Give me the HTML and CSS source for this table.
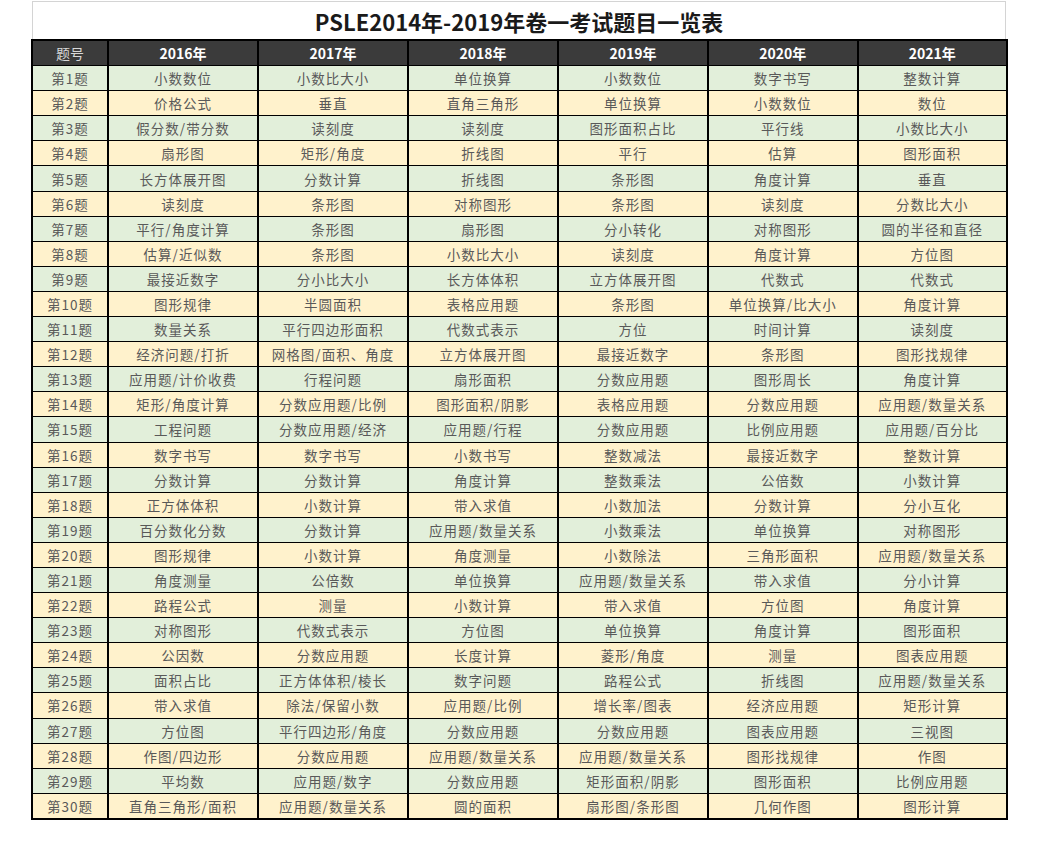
FILE: index.html
```html
<!DOCTYPE html>
<html lang="zh">
<head>
<meta charset="utf-8">
<title>PSLE2014年-2019年卷一考试题目一览表</title>
<link rel="stylesheet" href="styles.css">
</head>
<body>
<div class="sheet">
  <div class="title">PSLE2014年-2019年卷一考试题目一览表</div>
  <table class="grid">
    <colgroup>
      <col class="c-no"><col class="c-y"><col class="c-y"><col class="c-y"><col class="c-y"><col class="c-z"><col class="c-z">
    </colgroup>
    <thead>
      <tr><th class="h-no">题号</th><th>2016年</th><th>2017年</th><th>2018年</th><th>2019年</th><th>2020年</th><th>2021年</th></tr>
    </thead>
    <tbody>
      <tr class="g"><td>第1题</td><td>小数数位</td><td>小数比大小</td><td>单位换算</td><td>小数数位</td><td>数字书写</td><td>整数计算</td></tr>
      <tr class="y"><td>第2题</td><td>价格公式</td><td>垂直</td><td>直角三角形</td><td>单位换算</td><td>小数数位</td><td>数位</td></tr>
      <tr class="g"><td>第3题</td><td>假分数/带分数</td><td>读刻度</td><td>读刻度</td><td>图形面积占比</td><td>平行线</td><td>小数比大小</td></tr>
      <tr class="y"><td>第4题</td><td>扇形图</td><td>矩形/角度</td><td>折线图</td><td>平行</td><td>估算</td><td>图形面积</td></tr>
      <tr class="g"><td>第5题</td><td>长方体展开图</td><td>分数计算</td><td>折线图</td><td>条形图</td><td>角度计算</td><td>垂直</td></tr>
      <tr class="y"><td>第6题</td><td>读刻度</td><td>条形图</td><td>对称图形</td><td>条形图</td><td>读刻度</td><td>分数比大小</td></tr>
      <tr class="g"><td>第7题</td><td>平行/角度计算</td><td>条形图</td><td>扇形图</td><td>分小转化</td><td>对称图形</td><td>圆的半径和直径</td></tr>
      <tr class="y"><td>第8题</td><td>估算/近似数</td><td>条形图</td><td>小数比大小</td><td>读刻度</td><td>角度计算</td><td>方位图</td></tr>
      <tr class="g"><td>第9题</td><td>最接近数字</td><td>分小比大小</td><td>长方体体积</td><td>立方体展开图</td><td>代数式</td><td>代数式</td></tr>
      <tr class="y"><td>第10题</td><td>图形规律</td><td>半圆面积</td><td>表格应用题</td><td>条形图</td><td>单位换算/比大小</td><td>角度计算</td></tr>
      <tr class="g"><td>第11题</td><td>数量关系</td><td>平行四边形面积</td><td>代数式表示</td><td>方位</td><td>时间计算</td><td>读刻度</td></tr>
      <tr class="y"><td>第12题</td><td>经济问题/打折</td><td>网格图/面积、角度</td><td>立方体展开图</td><td>最接近数字</td><td>条形图</td><td>图形找规律</td></tr>
      <tr class="g"><td>第13题</td><td>应用题/计价收费</td><td>行程问题</td><td>扇形面积</td><td>分数应用题</td><td>图形周长</td><td>角度计算</td></tr>
      <tr class="y"><td>第14题</td><td>矩形/角度计算</td><td>分数应用题/比例</td><td>图形面积/阴影</td><td>表格应用题</td><td>分数应用题</td><td>应用题/数量关系</td></tr>
      <tr class="g"><td>第15题</td><td>工程问题</td><td>分数应用题/经济</td><td>应用题/行程</td><td>分数应用题</td><td>比例应用题</td><td>应用题/百分比</td></tr>
      <tr class="y"><td>第16题</td><td>数字书写</td><td>数字书写</td><td>小数书写</td><td>整数减法</td><td>最接近数字</td><td>整数计算</td></tr>
      <tr class="g"><td>第17题</td><td>分数计算</td><td>分数计算</td><td>角度计算</td><td>整数乘法</td><td>公倍数</td><td>小数计算</td></tr>
      <tr class="y"><td>第18题</td><td>正方体体积</td><td>小数计算</td><td>带入求值</td><td>小数加法</td><td>分数计算</td><td>分小互化</td></tr>
      <tr class="g"><td>第19题</td><td>百分数化分数</td><td>分数计算</td><td>应用题/数量关系</td><td>小数乘法</td><td>单位换算</td><td>对称图形</td></tr>
      <tr class="y"><td>第20题</td><td>图形规律</td><td>小数计算</td><td>角度测量</td><td>小数除法</td><td>三角形面积</td><td>应用题/数量关系</td></tr>
      <tr class="g"><td>第21题</td><td>角度测量</td><td>公倍数</td><td>单位换算</td><td>应用题/数量关系</td><td>带入求值</td><td>分小计算</td></tr>
      <tr class="y"><td>第22题</td><td>路程公式</td><td>测量</td><td>小数计算</td><td>带入求值</td><td>方位图</td><td>角度计算</td></tr>
      <tr class="g"><td>第23题</td><td>对称图形</td><td>代数式表示</td><td>方位图</td><td>单位换算</td><td>角度计算</td><td>图形面积</td></tr>
      <tr class="y"><td>第24题</td><td>公因数</td><td>分数应用题</td><td>长度计算</td><td>菱形/角度</td><td>测量</td><td>图表应用题</td></tr>
      <tr class="g"><td>第25题</td><td>面积占比</td><td>正方体体积/棱长</td><td>数字问题</td><td>路程公式</td><td>折线图</td><td>应用题/数量关系</td></tr>
      <tr class="y"><td>第26题</td><td>带入求值</td><td>除法/保留小数</td><td>应用题/比例</td><td>增长率/图表</td><td>经济应用题</td><td>矩形计算</td></tr>
      <tr class="g"><td>第27题</td><td>方位图</td><td>平行四边形/角度</td><td>分数应用题</td><td>分数应用题</td><td>图表应用题</td><td>三视图</td></tr>
      <tr class="y"><td>第28题</td><td>作图/四边形</td><td>分数应用题</td><td>应用题/数量关系</td><td>应用题/数量关系</td><td>图形找规律</td><td>作图</td></tr>
      <tr class="g"><td>第29题</td><td>平均数</td><td>应用题/数字</td><td>分数应用题</td><td>矩形面积/阴影</td><td>图形面积</td><td>比例应用题</td></tr>
      <tr class="y"><td>第30题</td><td>直角三角形/面积</td><td>应用题/数量关系</td><td>圆的面积</td><td>扇形图/条形图</td><td>几何作图</td><td>图形计算</td></tr>
    </tbody>
  </table>
</div>
</body>
</html>
```

FILE: styles.css
```css
html, body {
  margin: 0;
  padding: 0;
  background: #ffffff;
}

body {
  font-family: "Noto Sans CJK SC", "Noto Sans", sans-serif;
}

.sheet {
  margin: 1px 0 0 31px;
  width: 975px;
}

.title {
  box-sizing: border-box;
  height: 38px;
  margin-left: 1px;
  border-top: 1px solid #d4d4d4;
  border-left: 1px solid #d4d4d4;
  border-right: 1px solid #d4d4d4;
  text-align: center;
  font-size: 22px;
  font-weight: 700;
  line-height: 38px;
  color: #1a1a1a;
}

.grid {
  width: 975px;
  border-collapse: collapse;
  table-layout: fixed;
  border: 2px solid #000;
}

.c-no { width: 76px; }
.c-y { width: 150px; }
.c-z { width: 149.5px; }

.grid th,
.grid td {
  border: 1px solid #000;
  border-left-width: 2px;
  border-right-width: 2px;
  height: 24.1px;
  padding: 0;
  text-align: center;
  vertical-align: middle;
  white-space: nowrap;
  line-height: 24px;
}

.grid th {
  background: #3b3b3b;
  color: #ffffff;
  font-size: 14px;
  font-weight: 700;
}

.grid th.h-no {
  font-weight: 400;
  color: #d8d8d8;
}

.grid td {
  font-size: 13.5px;
  letter-spacing: 1px;
  color: #595959;
}

.grid tr.g td { background: #e2efda; }
.grid tr.y td { background: #fff2cc; }
```
